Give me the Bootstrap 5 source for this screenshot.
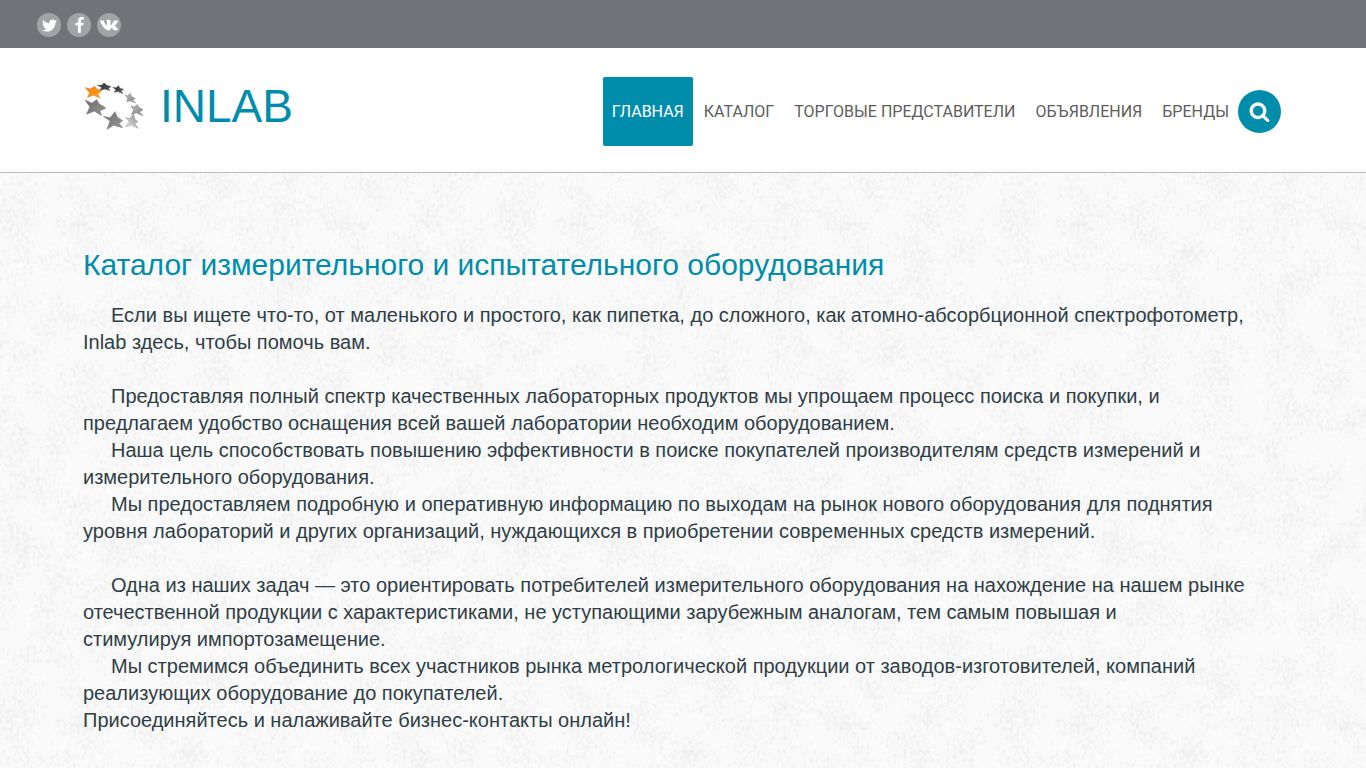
<!DOCTYPE html>
<html lang="ru">
<head>
<meta charset="utf-8">
<meta name="viewport" content="width=device-width, initial-scale=1">
<title>INLAB</title>
<link href="https://cdn.jsdelivr.net/npm/bootstrap@5.3.0/dist/css/bootstrap.min.css" rel="stylesheet">
<style>
:root { --teal: #008dac; }
body {
  font-family: "Liberation Sans", Arial, sans-serif;
  font-size: 20px; line-height: 27px; color: #2f3e46;
  background-color: #fafafa;
  background-image: url("data:image/svg+xml,%3Csvg xmlns='http://www.w3.org/2000/svg' width='500' height='500'%3E%3Cfilter id='p' x='0' y='0' width='100%25' height='100%25' color-interpolation-filters='sRGB'%3E%3CfeTurbulence type='fractalNoise' baseFrequency='.3 .22' numOctaves='3' seed='8' stitchTiles='stitch' result='a'/%3E%3CfeTurbulence type='fractalNoise' baseFrequency='.03' numOctaves='5' seed='3' stitchTiles='stitch' result='b'/%3E%3CfeComposite in='a' in2='b' operator='arithmetic' k2='.6' k3='.4'/%3E%3CfeColorMatrix values='0 0 0 0 .5 0 0 0 0 .5 0 0 0 0 .5 .36 0 0 0 -.18'/%3E%3C/filter%3E%3Crect width='500' height='500' filter='url(%23p)'/%3E%3C/svg%3E");
}
.topbar { background: #727378; padding: 13px 37px 11px; }
.social-row { gap: 6px; }
.social { width: 24px; height: 24px; background: #a2a3a5; color: #fff; }
.page-width { width: 100%; max-width: 1200px; margin: 0 auto; }
.site-header { background: #fff; border-bottom: 1px solid #bbb; padding: 29px 0 26px; }
.brand-name { font-size: 46px; line-height: 58px; color: var(--teal); }
.header-row { padding-right: 2px; }
.menu { font-family: Roboto, sans-serif; font-size: 16px; gap: 2px; }
.menu .nav-link { padding: 0 9px; line-height: 69px; color: #5d5d5d; border-radius: 2px; }
.menu .nav-link.active { background: var(--teal); color: #fff; }
.menu .nav-link:not(.active):hover { color: var(--teal); }
.search-btn { width: 43px; height: 43px; background: var(--teal); color: #fff; }
main { padding: 72px 30px 34px 0; }
.intro h1 { font-size: 30px; line-height: 40px; margin-bottom: 17px; color: var(--teal); }
.intro p { text-indent: 28px; }
.intro .flush { text-indent: 0; }
.spaced { margin-bottom: 27px; }
</style>
</head>
<body>
<div class="topbar d-flex">
  <div class="d-flex social-row">
    <a href="#" class="social rounded-circle d-flex align-items-center justify-content-center" aria-label="Twitter"><svg width="17" height="17" viewBox="0 0 1792 1792" fill="currentColor"><path d="M1684 408q-67 98-162 167 1 14 1 42 0 130-38 259.500t-115.500 248.500-184.500 210.500-258 146-323 54.500q-271 0-496-145 35 4 78 4 225 0 401-138-105-2-188-64.500t-114-159.500q33 5 61 5 43 0 85-11-112-23-185.500-111.500t-73.500-205.500v-4q68 38 146 41-66-44-105-115t-39-154q0-88 44-163 121 149 294.500 238.500t371.500 99.500q-8-38-8-74 0-134 94.500-228.500t228.500-94.500q140 0 236 102 109-21 205-78-37 115-142 178 93-10 186-50z"/></svg></a>
    <a href="#" class="social rounded-circle d-flex align-items-center justify-content-center" aria-label="Facebook"><svg width="17" height="17" viewBox="0 0 1792 1792" fill="currentColor"><path d="M1343 12v264h-157q-86 0-116 36t-30 108v189h293l-39 296h-254v759h-306v-759h-255v-296h255v-218q0-186 104-288.500t277-102.500q147 0 228 12z"/></svg></a>
    <a href="#" class="social rounded-circle d-flex align-items-center justify-content-center" aria-label="VK"><svg width="18" height="18" viewBox="0 0 24 24" fill="currentColor"><path d="M13.162 18.994c.609 0 .858-.406.851-.915-.031-1.917.714-2.949 2.059-1.604 1.488 1.488 1.796 2.519 3.603 2.519h3.200c.808 0 1.126-.26 1.126-.668 0-.863-1.421-2.386-2.625-3.504-1.686-1.565-1.765-1.602-.313-3.486 1.801-2.339 4.157-5.336 2.073-5.336h-3.981c-.772 0-.828.435-1.103 1.083-.995 2.347-2.886 5.387-3.604 4.922-.751-.485-.407-2.406-.35-5.261.015-.754.011-1.271-1.141-1.539-.629-.145-1.241-.205-1.809-.205-2.273 0-3.841.953-2.950 1.119 1.571.293 1.420 3.692 1.054 5.160-.638 2.556-3.036-2.024-4.035-4.305-.241-.548-.315-.974-1.175-.974h-3.255c-.492 0-.787.16-.787.516 0 .602 2.960 6.720 5.786 9.770 2.756 2.975 5.480 2.708 7.376 2.708z"/></svg></a>
  </div>
</div>

<header class="site-header">
  <div class="page-width header-row d-flex flex-wrap align-items-start justify-content-between">
    <a href="#" class="d-flex align-items-center gap-3 text-decoration-none">
      <svg width="61" height="50" viewBox="21 21 183 150" aria-hidden="true">
        <defs>
          <linearGradient id="or" x1="0" y1="0" x2="1" y2="1"><stop offset="0" stop-color="#f0820a"/><stop offset=".5" stop-color="#ff8c0c"/><stop offset="1" stop-color="#ffb03a"/></linearGradient>
          <linearGradient id="dk" x1="0" y1="0" x2="1" y2="1"><stop offset="0" stop-color="#222"/><stop offset="1" stop-color="#666"/></linearGradient>
          <linearGradient id="md" x1="0" y1="0" x2="1" y2="1"><stop offset="0" stop-color="#6a6a6a"/><stop offset="1" stop-color="#999"/></linearGradient>
          <linearGradient id="lt" x1="0" y1="0" x2="1" y2="1"><stop offset="0" stop-color="#c4c4c4"/><stop offset="1" stop-color="#777"/></linearGradient>
          <linearGradient id="pale" x1="0" y1="1" x2="1" y2="0"><stop offset="0" stop-color="#eee"/><stop offset="1" stop-color="#888"/></linearGradient>
        </defs>
        <g stroke-width="2" stroke-linejoin="round">
          <path fill="url(#or)" stroke="#e0801c" d="M28 41 44 45 56 37 62 46 77 50 65 60 72 72 52 63 35 70 41 56z"/>
          <path fill="url(#dk)" stroke="#444" d="M65 34 78 34 84 27 92 34 105 38 97 42 101 49 87 45 73 48 77 40z"/>
          <path fill="url(#dk)" stroke="#888" d="M110 39 120 41 127 35 133 43 143 46 136 51 141 60 127 53 114 55 119 48z"/>
          <path fill="url(#lt)" stroke="#999" d="M147 62 154 66 163 58 167 68 178 74 169 78 179 87 162 80 152 83 155 73z"/>
          <path fill="url(#lt)" stroke="#888" d="M165 95 173 100 184 92 190 101 201 107 190 114 201 125 181 116 166 122 173 108z"/>
          <path fill="url(#md)" stroke="#666" d="M28 79 48 88 62 77 69 90 89 102 71 110 76 124 55 111 32 120 42 99z"/>
          <path fill="url(#pale)" stroke="#aaa" d="M149 130 159 134 173 121 177 136 186 143 177 149 187 163 166 153 149 158 160 143z"/>
          <path fill="url(#md)" stroke="#888" d="M82 127 102 131 117 113 124 129 140 140 129 148 140 161 113 154 93 166 102 141z"/>
        </g>
      </svg>
      <span class="brand-name">INLAB</span>
    </a>
    <div class="d-flex align-items-center">
      <nav class="menu nav" aria-label="Основное меню">
        <a class="nav-link active" aria-current="page" href="#">ГЛАВНАЯ</a>
        <a class="nav-link" href="#">КАТАЛОГ</a>
        <a class="nav-link" href="#">ТОРГОВЫЕ ПРЕДСТАВИТЕЛИ</a>
        <a class="nav-link" href="#">ОБЪЯВЛЕНИЯ</a>
        <a class="nav-link" href="#">БРЕНДЫ</a>
      </nav>
      <button type="button" class="search-btn border-0 rounded-circle p-0 d-flex align-items-center justify-content-center" aria-label="Поиск"><svg width="21" height="21" viewBox="0 0 1792 1792" fill="currentColor" stroke="currentColor" stroke-width="30"><path d="M1216 832q0-185-131.500-316.500t-316.500-131.500-316.500 131.500-131.500 316.500 131.500 316.500 316.500 131.500 316.500-131.500 131.500-316.500zm512 832q0 52-38 90t-90 38q-54 0-90-38l-343-342q-179 124-399 124-143 0-273.500-55.500t-225-150-150-225-55.500-273.500 55.500-273.500 150-225 225-150 273.500-55.500 273.500 55.500 225 150 150 225 55.500 273.500q0 220-124 399l343 343q37 37 37 90z"/></svg></button>
    </div>
  </div>
</header>

<main class="page-width intro">
  <h1>Каталог измерительного и испытательного оборудования</h1>
  <p class="spaced">Если вы ищете что-то, от маленького и простого, как пипетка, до сложного, как атомно-абсорбционной спектрофотометр, Inlab здесь, чтобы помочь вам.</p>
  <p class="mb-0">Предоставляя полный спектр качественных лабораторных продуктов мы упрощаем процесс поиска и покупки, и предлагаем удобство оснащения всей вашей лаборатории необходим оборудованием.</p>
  <p class="mb-0">Наша цель способствовать повышению эффективности в поиске покупателей производителям средств измерений и измерительного оборудования.</p>
  <p class="spaced">Мы предоставляем подробную и оперативную информацию по выходам на рынок нового оборудования для поднятия уровня лабораторий и других организаций, нуждающихся в приобретении современных средств измерений.</p>
  <p class="mb-0">Одна из наших задач — это ориентировать потребителей измерительного оборудования на нахождение на нашем рынке отечественной продукции с характеристиками, не уступающими зарубежным аналогам, тем самым повышая и стимулируя&nbsp;импортозамещение.</p>
  <p class="mb-0">Мы стремимся объединить всех участников рынка метрологической продукции от заводов-изготовителей, компаний реализующих оборудование до покупателей.</p>
  <p class="flush mb-0">Присоединяйтесь и налаживайте бизнес-контакты онлайн!</p>
</main>
<script src="https://cdn.jsdelivr.net/npm/bootstrap@5.3.0/dist/js/bootstrap.bundle.min.js"></script>
</body>
</html>
